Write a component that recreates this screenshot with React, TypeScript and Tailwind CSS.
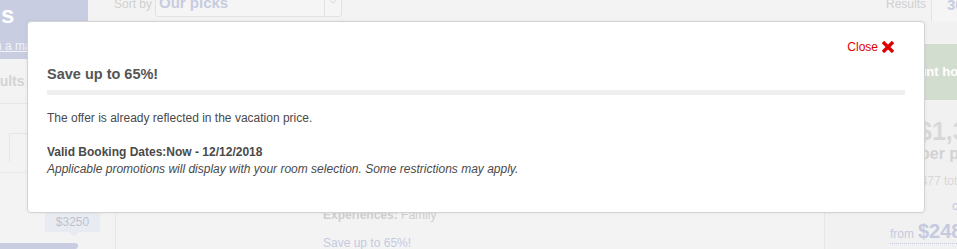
import React from 'react';

const CloseIcon: React.FC = () => (
  <svg viewBox="0 0 12 12" className="h-[12px] w-[12px]">
    <path d="M2.2 2.2L9.8 9.8M9.8 2.2L2.2 9.8" stroke="currentColor" strokeWidth="3.4" strokeLinecap="square" />
  </svg>
);

const OfferModal: React.FC = () => (
  <div className="absolute left-[27px] top-[21px] z-20 h-[192px] w-[898px] rounded-[4px] border border-[#d2d2d2] bg-white shadow-[0_0_4px_rgba(0,0,0,0.06)]">
    <div className="flex justify-end pr-[30px] pt-[18px]">
      <button className="flex items-center gap-[4px] text-[12px] leading-[14px] text-[#dd0000]">
        Close <CloseIcon />
      </button>
    </div>
    <div className="px-[19px]">
      <h2 className="mt-[12px] text-[14.5px] font-bold leading-[17px] text-[#555]">Save up to 65%!</h2>
      <div className="mt-[7px] h-[5px] bg-[#efefef]" />
      <div className="mt-[15px] text-[12px] leading-[17px] text-[#4a4a4a]">
        <p>The offer is already reflected in the vacation price.</p>
        <p className="mt-[17px] font-bold">Valid Booking Dates:Now - 12/12/2018</p>
        <p className="italic">Applicable promotions will display with your room selection. Some restrictions may apply.</p>
      </div>
    </div>
  </div>
);

const App: React.FC = () => {
  return (
    <div className="relative h-[249px] w-[957px] overflow-hidden bg-[#f3f3f3] font-['Liberation_Sans',Arial,sans-serif]">
      <div className="flex h-full">
        {/* left filters column */}
        <aside className="relative z-10 flex w-[88px] shrink-0 flex-col">
          <div className="h-[63px] bg-[#c9cde1]">
            <div className="pl-[1px] pt-[1px] text-[24px] font-bold leading-[28px] text-white">s</div>
            <a className="-ml-[5px] mt-[10px] block whitespace-nowrap text-[12px] leading-[14px] text-[#f2f3f8] underline">n a map</a>
          </div>
          <div className="-ml-[26px] mt-[14px] whitespace-nowrap text-[14px] font-bold leading-[16px] text-[#d3d3d3]">Results</div>
          <div className="mt-[14px] border-t border-[#e6e6e6]" />
          <div className="ml-[9px] mt-[29px] h-[30px] border-l border-t border-[#e6e6e6]" />
          <div className="mt-[10px] border-t border-[#e8e8e8]" />
          <div className="ml-[45px] mt-[40px] flex h-[21px] w-[55px] items-center justify-center bg-[#e9ebf2] text-[12px] text-[#bfc2cc]">
            $3250
          </div>
          <div className="ml-[69px] h-0 w-0 border-x-[5px] border-t-[5px] border-x-transparent border-t-[#e9ebf2]" />
          <div className="mt-[6px] h-[6px] w-[78px] rounded-r-[3px] bg-[#c9cde1]" />
        </aside>

        {/* results column */}
        <main className="flex min-w-0 flex-1 flex-col">
          <div className="flex h-[21px] items-start">
            <span className="-mt-[3px] ml-[26px] text-[12px] leading-[14px] text-[#d0d0d0]">Sort by</span>
            <div className="-mt-[6px] ml-[3px] flex h-[23px] w-[187px] items-stretch rounded-[3px] border border-[#e2e2e2] bg-[#f5f5f5]">
              <span className="flex-1 pl-[3px] text-[15px] font-bold leading-[16px] text-[#c7cce0]">Our picks</span>
              <span className="flex w-[17px] items-start justify-center border-l border-[#e2e2e2] pt-[4px]">
                <svg viewBox="0 0 10 6" className="h-[5px] w-[8px] text-[#d6d6d6]">
                  <path d="M1 1l4 4 4-4" fill="none" stroke="currentColor" strokeWidth="1.2" />
                </svg>
              </span>
            </div>
            <span className="-mt-[3px] ml-auto text-[12px] leading-[14px] text-[#d0d0d0]">Results</span>
            <div className="-mr-[44px] -mt-[4px] ml-[5px] h-[30px] w-[70px] shrink-0 overflow-hidden whitespace-nowrap rounded-[3px] border border-[#e2e2e2] bg-[#f5f5f5] pl-[15px] text-[15px] font-bold leading-[16px] text-[#c7cce0]">
              30 per page
            </div>
          </div>

          <div className="flex flex-1 pl-[27px]">
            <div className="flex-1 border-l border-[#e6e6e6] pl-[207px] pt-[186px] text-[12px] leading-[17px]">
              <p className="text-[#cfcfcf]">
                <span className="font-bold">Experiences:</span> Family
              </p>
              <p className="mt-[11px] text-[#c5cae0]">Save up to 65%!</p>
            </div>
            <div className="w-[133px] shrink-0 border-l border-[#e6e6e6] bg-[#f1f1f1] pt-[23px]">
              <div className="flex h-[56px] items-center whitespace-nowrap bg-[#d3ddcf] pl-[58px] text-[13px] font-bold text-white">
                Discount hotel
              </div>
              <div className="mt-[19px] whitespace-nowrap pl-[93px] text-[25px] font-bold leading-[25px] text-[#d8d8d8]">$1,399</div>
              <div className="whitespace-nowrap pl-[95px] text-[16px] font-bold leading-[20px] text-[#d3d3d3]">per person</div>
              <div className="mt-[9px] whitespace-nowrap pl-[79px] text-[12px] leading-[17px] text-[#d8d8d8]">$2,477 total</div>
              <div className="mt-[8px] whitespace-nowrap pl-[127px] text-[12px] leading-[17px] text-[#c5cae0]">compare</div>
              <div className="mt-[6px] whitespace-nowrap pl-[65px]">
                <a className="inline-flex items-baseline gap-[4px] border-b border-dotted border-[#c5cae0] text-[#c5cae0]">
                  <span className="text-[12px]">from</span>
                  <span className="text-[20px] font-bold leading-[20px]">$248</span>
                </a>
              </div>
            </div>
          </div>
        </main>
      </div>

      <OfferModal />
    </div>
  );
};

export default App;
